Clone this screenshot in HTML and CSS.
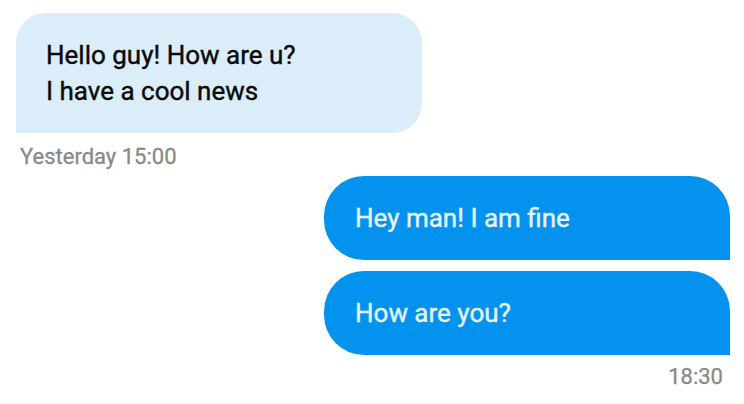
FILE: index.html
```html
<!DOCTYPE html>
<html>
<head>
<meta charset="utf-8">
<link rel="stylesheet" href="styles.css">
</head>
<body>
<div class="chat">
  <div class="group in">
    <div class="bubble bubble-in">Hello guy! How are u?<br>I have a cool news</div>
    <div class="time time-in">Yesterday 15:00</div>
  </div>
  <div class="group out">
    <div class="bubble bubble-out">Hey man! I am fine</div>
    <div class="bubble bubble-out">How are you?</div>
    <div class="time time-out">18:30</div>
  </div>
</div>
</body>
</html>
```
FILE: styles.css
```css
html, body {
  margin: 0;
  padding: 0;
  background: #ffffff;
}
.chat {
  font-family: Roboto, "Noto Sans", sans-serif;
  padding: 13px 14px 0 16px;
  display: flex;
  flex-direction: column;
}
.group {
  display: flex;
  flex-direction: column;
}
.group.in {
  align-items: flex-start;
}
.group.out {
  align-items: flex-end;
  margin-top: 7px;
  gap: 11px;
}
.bubble {
  box-sizing: border-box;
  width: 406px;
  font-size: 26px;
  font-weight: 400;
  line-height: 36px;
  padding: 24px 30px;
  -webkit-text-stroke: 0.4px currentColor;
}
.bubble-in {
  background: #dbedf8;
  color: #0a0a0a;
  border-radius: 30px 30px 30px 0;
}
.bubble-out {
  background: #0393ee;
  color: #e6f3fc;
  padding: 24px 31px;
  border-radius: 40px 40px 0 40px;
}
.time {
  color: #888888;
  font-size: 22px;
  font-weight: 400;
  line-height: 24px;
  -webkit-text-stroke: 0.3px currentColor;
}
.time-in {
  margin-top: 12px;
  margin-left: 4px;
}
.time-out {
  margin-top: -1px;
  margin-right: 7px;
}
```
